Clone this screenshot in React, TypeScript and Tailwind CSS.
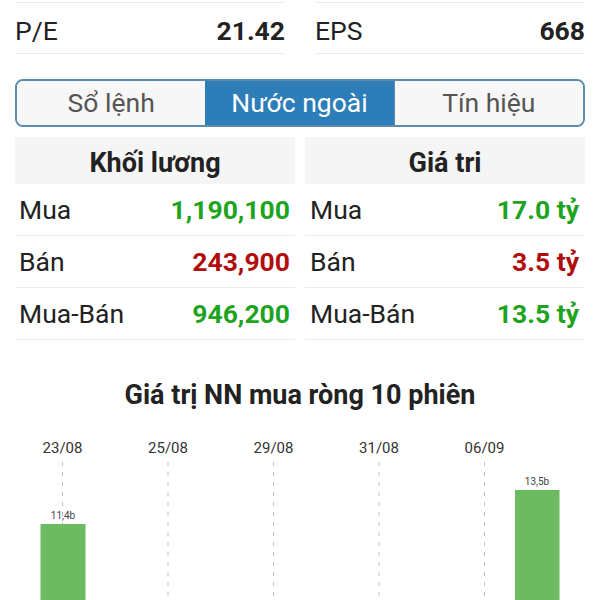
import React from 'react';

const green = 'text-[#1ea31e]';
const red = 'text-[#b20d0d]';

type Row = { label: string; value: string; up: boolean };

const volumeRows: Row[] = [
  { label: 'Mua', value: '1,190,100', up: true },
  { label: 'Bán', value: '243,900', up: false },
  { label: 'Mua-Bán', value: '946,200', up: true },
];

const valueRows: Row[] = [
  { label: 'Mua', value: '17.0 tỷ', up: true },
  { label: 'Bán', value: '3.5 tỷ', up: false },
  { label: 'Mua-Bán', value: '13.5 tỷ', up: true },
];

const StatTable: React.FC<{ title: string; rows: Row[]; pad: string }> = ({ title, rows, pad }) => (
  <div className="flex-1">
    <div className="flex h-[47px] items-center justify-center bg-[#f5f5f5] pt-[6px] text-[27px] font-bold text-[#222]">
      {title}
    </div>
    {rows.map((r) => (
      <div key={r.label} className={`flex h-[52px] items-center justify-between border-b border-[#ececec] ${pad}`}>
        <span className="text-[26.5px] text-[#222]">{r.label}</span>
        <span className={`text-[26.5px] font-bold ${r.up ? green : red}`}>{r.value}</span>
      </div>
    ))}
  </div>
);

const dates = [
  { x: 62.5, label: '23/08' },
  { x: 168, label: '25/08' },
  { x: 273.5, label: '29/08' },
  { x: 379, label: '31/08' },
  { x: 484.5, label: '06/09' },
];

const NetBuyChart: React.FC = () => (
  <svg width={600} height={175} viewBox="0 0 600 175" className="block">
    {dates.map((d) => (
      <g key={d.label}>
        <line x1={d.x} y1={37} x2={d.x} y2={175} stroke="#bdbdbd" strokeWidth={1} strokeDasharray="4 6" />
        <text x={d.x} y={28} textAnchor="middle" fontSize={15} fill="#333" fontFamily="Roboto, sans-serif">
          {d.label}
        </text>
      </g>
    ))}
    <rect x={40.5} y={99} width={45} height={80} fill="#6cbb63" />
    <text x={63} y={94} textAnchor="middle" fontSize={10} fill="#444" fontFamily="Roboto, sans-serif">
      11,4b
    </text>
    <rect x={515} y={65} width={44.5} height={115} fill="#6cbb63" />
    <text x={537} y={60} textAnchor="middle" fontSize={10} fill="#444" fontFamily="Roboto, sans-serif">
      13,5b
    </text>
  </svg>
);

const App: React.FC = () => {
  return (
    <div className="h-[600px] w-[600px] overflow-hidden bg-white font-['Roboto',sans-serif]">
      <div className="flex gap-[30px] px-[15px] pt-[2px]">
        <div className="flex h-[52px] flex-1 items-center justify-between border-y border-[#ececec] pt-[6px]">
          <span className="text-[26.5px] text-[#222]">P/E</span>
          <span className="text-[26.5px] font-bold text-[#222]">21.42</span>
        </div>
        <div className="flex h-[52px] flex-1 items-center justify-between border-y border-[#ececec] pt-[6px]">
          <span className="text-[26.5px] text-[#222]">EPS</span>
          <span className="text-[26.5px] font-bold text-[#222]">668</span>
        </div>
      </div>

      <div className="mx-[15px] mt-[25px] flex h-[48px] overflow-hidden rounded-[8px] border-2 border-[#5b8bad]">
        <div className="flex flex-1 items-center justify-center bg-[#f7f7f7] text-[26.5px] text-[#555]">Sổ lệnh</div>
        <div className="flex flex-1 items-center justify-center bg-[#2d7db8] text-[26.5px] text-white">Nước ngoài</div>
        <div className="flex flex-1 items-center justify-center border-l border-[#5b8bad] bg-[#f7f7f7] text-[26.5px] text-[#555]">
          Tín hiệu
        </div>
      </div>

      <div className="mt-[10px] flex gap-[10px] px-[15px]">
        <StatTable title="Khối lương" rows={volumeRows} pad="pl-1 pr-[5px]" />
        <StatTable title="Giá tri" rows={valueRows} pad="pl-[5px] pr-[6px]" />
      </div>

      <div className="mt-[35px] text-center text-[27px] leading-[40px] font-bold text-[#222]">
        Giá trị NN mua ròng 10 phiên
      </div>

      <div className="mt-[10px]">
        <NetBuyChart />
      </div>
    </div>
  );
};

export default App;
